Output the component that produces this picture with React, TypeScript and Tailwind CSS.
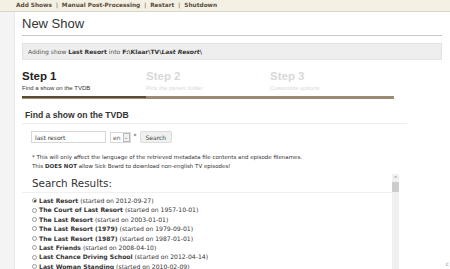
import React from "react";

const results: [string, string][] = [
  ["Last Resort", "2012-09-27"],
  ["The Court of Last Resort", "1957-10-01"],
  ["The Last Resort", "2003-01-01"],
  ["The Last Resort (1979)", "1979-09-01"],
  ["The Last Resort (1987)", "1987-01-01"],
  ["Last Friends", "2008-04-10"],
  ["Last Chance Driving School", "2012-04-14"],
  ["Last Woman Standing", "2010-02-09"],
];

const dv = { fontFamily: '"DejaVu Sans", Verdana, sans-serif' };
const ar = { fontFamily: '"Liberation Sans", Arial, sans-serif' };

export default function App() {
  return (
    <div className="w-[450px] h-[269px] overflow-hidden bg-white text-[#333] flex flex-col" style={dv}>
      <div className="h-[12px] shrink-0 bg-[#f4f0e4] border-b border-[#dcd6c6] flex items-center pl-[16px] text-[5.8px] font-bold text-[#5b4c3a] whitespace-nowrap">
        <span>Add Shows</span>
        <span className="mx-[4px] font-normal">|</span>
        <span>Manual Post-Processing</span>
        <span className="mx-[4px] font-normal">|</span>
        <span>Restart</span>
        <span className="mx-[4px] font-normal">|</span>
        <span>Shutdown</span>
      </div>
      <div className="flex flex-1 min-h-0">
        <div className="w-[15px] shrink-0 bg-[#f4f4f4] border-r border-[#e8e8e8]" />
        <div className="w-[420px] ml-[7px] flex flex-col min-h-0">
          <div className="pt-[4px] pb-[3px] border-b border-[#c8c8c8] text-[13px] leading-[16px] text-[#333]" style={ar}>
            New Show
          </div>
          <div className="mt-[7px] h-[17px] bg-[#eeeeee] border border-[#e2e2e2] flex items-center pl-[5px] text-[6px] text-[#555] whitespace-nowrap">
            Adding show&nbsp;<b className="text-[#333]">Last Resort</b>&nbsp;into&nbsp;
            <b className="text-[#333]">
              F:\Klaar\TV\<i>Last Resort</i>\
            </b>
          </div>
          <div className="mt-[10px] flex w-[372px]" style={ar}>
            {[
              ["Step 1", "Find a show on the TVDB", true],
              ["Step 2", "Pick the parent folder", false],
              ["Step 3", "Customize options", false],
            ].map(([t, s, active]) => (
              <div key={t as string} className="w-[124px] flex flex-col">
                <div className={`text-[11.5px] leading-[13px] font-bold ${active ? "text-[#222]" : "text-[#d8d8d8]"}`}>{t}</div>
                <div className={`text-[6px] leading-[8px] mt-[1px] ${active ? "text-[#333]" : "text-[#d8d8d8]"}`}>{s}</div>
                <div className={`mt-[4px] h-[3px] ${active ? "bg-[#5a4b3b] border-b border-[#a08c72]" : "bg-[#9c8a74]"}`} />
              </div>
            ))}
          </div>
          <div className="mt-[11px] w-[385px] pl-[3px] pb-[3px] border-b border-[#eeeeee] text-[8.6px] leading-[10px] font-bold text-[#333]" style={ar}>
            Find a show on the TVDB
          </div>
          <div className="mt-[7px] ml-[9px] flex items-center h-[12px] text-[6px]">
            <div className="w-[75px] h-[12px] border border-[#d8d8d8] flex items-center pl-[3px] text-[#333]">last resort</div>
            <div className="ml-[4px] h-[11px] flex items-center border border-[#d8d8d8] pl-[2px] text-[#555]">
              en
              <span className="ml-[2px] w-[7px] h-[9px] border border-[#bbb] bg-[#f0f0f0] flex items-center justify-center text-[5px] leading-none">⌄</span>
            </div>
            <span className="ml-[3px] text-[#333] -mt-[3px]">*</span>
            <div className="ml-[3px] h-[12px] px-[5px] bg-[#f0f0f0] border border-[#dcdcdc] rounded-[2px] flex items-center text-[#444]">Search</div>
          </div>
          <div className="mt-[10px] ml-[10px] text-[5.5px] leading-[9px] text-[#333] whitespace-nowrap">
            <div>* This will only affect the language of the retrieved metadata file contents and episode filenames.</div>
            <div>
              This <b>DOES NOT</b> allow Sick Beard to download non-english TV episodes!
            </div>
          </div>
          <div className="mt-[3px] flex flex-1 min-h-0 w-[377px]">
            <div className="flex-1 flex flex-col">
              <div className="ml-[10px] pt-[3px] text-[10.4px] leading-[13px] text-[#333]">Search Results:</div>
              <div className="mt-[2px] border-t border-[#f0f0f0] pl-[10px] pt-[3px] text-[6.1px] leading-[9.4px] whitespace-nowrap">
                {results.map(([n, d], i) => (
                  <div key={i} className="flex items-center">
                    <span className={`w-[5px] h-[5px] rounded-full border border-[#999] mr-[2px] flex items-center justify-center ${i === 0 ? "bg-white" : ""}`}>
                      {i === 0 && <span className="w-[2px] h-[2px] rounded-full bg-[#222]" />}
                    </span>
                    <b>{n}</b>&nbsp;(started on {d})
                  </div>
                ))}
              </div>
            </div>
            <div className="w-[7px] bg-[#f0f0f0] flex flex-col items-center">
              <div className="h-[8px] text-[5px] leading-[8px] text-[#777]">^</div>
              <div className="w-[7px] h-[10px] bg-[#cdcdcd]" />
            </div>
          </div>
        </div>
        <div className="flex-1 flex items-end justify-end pr-[1px] pb-[1px]">
          <span className="text-[6px] text-[#999]">c</span>
        </div>
      </div>
    </div>
  );
}
